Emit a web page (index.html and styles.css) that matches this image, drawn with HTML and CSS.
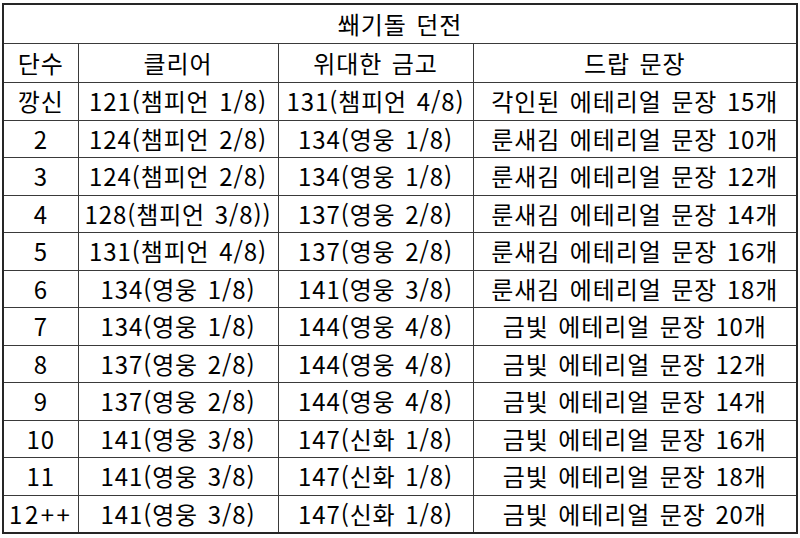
FILE: index.html
```html
<!DOCTYPE html>
<html lang="ko">
<head>
<meta charset="utf-8">
<link rel="stylesheet" href="styles.css">
</head>
<body>
<table class="sheet">
  <colgroup>
    <col class="c1"><col class="c2"><col class="c3"><col class="c4">
  </colgroup>
  <tr class="title"><td colspan="4">쐐기돌 던전</td></tr>
  <tr class="head"><td>단수</td><td>클리어</td><td>위대한 금고</td><td>드랍 문장</td></tr>
  <tr><td>깡신</td><td>121(챔피언 1/8)</td><td>131(챔피언 4/8)</td><td>각인된 에테리얼 문장 15개</td></tr>
  <tr><td>2</td><td>124(챔피언 2/8)</td><td>134(영웅 1/8)</td><td>룬새김 에테리얼 문장 10개</td></tr>
  <tr><td>3</td><td>124(챔피언 2/8)</td><td>134(영웅 1/8)</td><td>룬새김 에테리얼 문장 12개</td></tr>
  <tr><td>4</td><td>128(챔피언 3/8))</td><td>137(영웅 2/8)</td><td>룬새김 에테리얼 문장 14개</td></tr>
  <tr><td>5</td><td>131(챔피언 4/8)</td><td>137(영웅 2/8)</td><td>룬새김 에테리얼 문장 16개</td></tr>
  <tr><td>6</td><td>134(영웅 1/8)</td><td>141(영웅 3/8)</td><td>룬새김 에테리얼 문장 18개</td></tr>
  <tr><td>7</td><td>134(영웅 1/8)</td><td>144(영웅 4/8)</td><td>금빛 에테리얼 문장 10개</td></tr>
  <tr><td>8</td><td>137(영웅 2/8)</td><td>144(영웅 4/8)</td><td>금빛 에테리얼 문장 12개</td></tr>
  <tr><td>9</td><td>137(영웅 2/8)</td><td>144(영웅 4/8)</td><td>금빛 에테리얼 문장 14개</td></tr>
  <tr><td>10</td><td>141(영웅 3/8)</td><td>147(신화 1/8)</td><td>금빛 에테리얼 문장 16개</td></tr>
  <tr><td>11</td><td>141(영웅 3/8)</td><td>147(신화 1/8)</td><td>금빛 에테리얼 문장 18개</td></tr>
  <tr><td class="wide">12++</td><td>141(영웅 3/8)</td><td>147(신화 1/8)</td><td>금빛 에테리얼 문장 20개</td></tr>
</table>
</body>
</html>
```

FILE: styles.css
```css
html, body {
  margin: 0;
  padding: 0;
  background: #ffffff;
}
body {
  padding: 3px 0 0 2px;
  font-family: "Noto Sans CJK KR", "Noto Sans", sans-serif;
  color: #000000;
}
.sheet {
  border-collapse: collapse;
  table-layout: fixed;
  width: 794px;
  border: 2px solid #262626;
}
.c1 { width: 75px; }
.c2 { width: 200px; }
.c3 { width: 195px; }
.c4 { width: 324px; }
.sheet td {
  border: 1px solid #3a3a3a;
  text-align: center;
  vertical-align: middle;
  font-size: 24px;
  letter-spacing: 0.9px;
  word-spacing: 2px;
  line-height: 30px;
  height: 36.5px;
  padding: 0;
  white-space: nowrap;
  overflow: hidden;
}
.sheet td.wide {
  letter-spacing: 2.5px;
}
.sheet .title td,
.sheet .head td {
  height: 38px;
}
```
